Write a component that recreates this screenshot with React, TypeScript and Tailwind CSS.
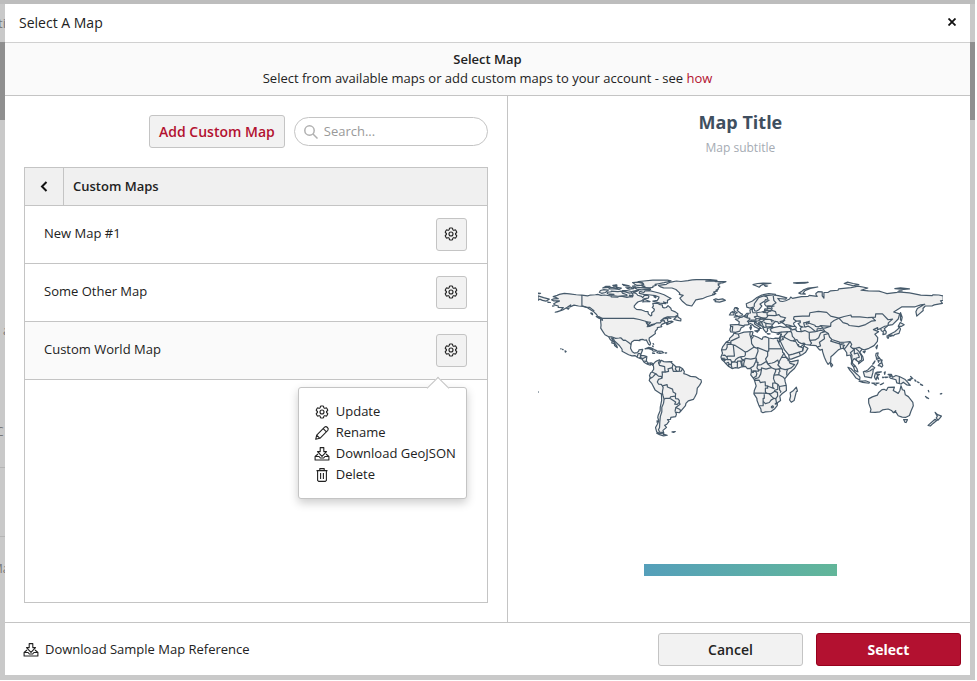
import { useState } from "react";
import { HiOutlineCog6Tooth } from "react-icons/hi2";

// Rings are plain lon/lat pairs, the map group flips the y axis
const LAND = [
  // North America
  "-168 65.6 -166 66.3 -162 66.5 -164 67.6 -166.5 68.4 -163 69.5 -161 70.3 -156.6 71.3 -152 70.8 -146 70 -141 69.7 -136 69 -134 69.6 -129 70 -127 70.3 -124 69.5 -121 69.8 -115 68.9 -115 68.2 -109 67.9 -108 68.6 -106 68.8 -101 67.7 -98 68.4 -96 68.2 -95.5 69.8 -96.5 71.2 -94.6 71.9 -92.5 70.9 -91.5 69.6 -88 68.6 -87 67.4 -85.5 69.5 -82.5 69.6 -81.5 68.5 -82 67 -86 66.3 -88 64.5 -91 63.8 -93 62 -94.5 60.2 -94.5 58.8 -92.5 57 -88 56.5 -85 55.3 -82.3 55.1 -82 53 -80 51.3 -79 51.6 -79 54 -77 55.5 -76.6 57.2 -78.5 58.8 -77.5 60 -78 62.4 -74 62.4 -71.5 61.2 -69.6 61 -69.3 59 -68 58.3 -66 58.7 -64.5 60.3 -62 58 -61.5 56.3 -58 54.8 -55.8 53.2 -56 51.7 -59 50.3 -65 50.3 -68.5 49 -71 47 -68 48.7 -64.5 49 -65 47.3 -64.5 46.2 -61 46.5 -60 46 -63 44.6 -65.5 43.5 -66 44.5 -64.5 45.4 -67 45 -70 43.7 -70.8 42.5 -70 41.7 -72 41.2 -74 40.8 -74 39.5 -75.5 38 -76 37 -75.7 35.5 -78 33.9 -81.2 31.5 -81.3 29.8 -80 27 -80.5 25.2 -81.8 26 -82.8 28 -83.8 29.9 -85.2 29.6 -87 30.4 -89.5 30.2 -89.5 29.2 -91.5 29.4 -94.5 29.5 -97 27.8 -97.4 25.5 -97.8 22.5 -96.2 19.3 -94.5 18.2 -92 18.6 -90.7 19.5 -90.3 21 -87 21.4 -87.6 19.5 -88.2 18.2 -88.9 15.9 -86 15.9 -83.3 15.1 -83.7 12 -83.5 10.8 -81.8 9 -79.6 9.6 -77.4 8.6 -77.9 7.3 -80 8.5 -80.3 7.4 -82.8 8.3 -84 9 -85.8 10 -87.5 12.8 -91 14 -94 16 -96.5 15.7 -99.5 16.7 -102 18 -105.3 19.8 -105.3 21.6 -108 25.2 -112 28.9 -113.1 31.2 -114.7 31.7 -113 28.5 -110 24.5 -109.5 23 -112 25 -112.2 26.5 -114.5 27.2 -114.1 28.6 -116 30.5 -117.2 32.7 -120.5 34.5 -122.5 37.5 -124.3 40.3 -124 43 -124.5 48 -122.7 47.3 -123 49 -127 50.8 -128 52.5 -130.4 54.8 -133 56.5 -136 58.5 -140 59.7 -144 60 -148 60.8 -151.5 59.2 -151 61 -154 59 -158 56.5 -163 54.8 -164.7 54.5 -160 56 -157.5 58.6 -162 58.7 -162 60 -165.5 61 -166 62 -164 63.2 -161 64.2 -161 64.7 -166 64.5",
  // Greenland
  "-46.8 82.6 -43 83.2 -39 83.5 -32 83.6 -27 83.4 -21 82.7 -31 82.2 -24 82.3 -22 81.7 -13 81.7 -16 80.6 -20 80.2 -18 80 -20 78.8 -18.5 77 -20 76 -19.6 75.2 -22 74 -20.5 73.5 -24 72.3 -22 71 -25 70.5 -23 70.2 -30 68.2 -34 66.5 -39.8 65.5 -42 62 -43.5 60 -48 61 -51.5 64 -54 67 -51 69.5 -54.5 70.3 -54 71.5 -57.5 74.7 -61 76 -68.5 76.1 -71 77 -73 78.3 -66 79.2 -65 80.1 -62 81.3 -57 82.2 -53 81.8",
  // Canadian archipelago
  "-61.8 82.4 -65 83 -70 83.1 -78 83 -86 82.2 -91 81.6 -87 80.5 -86 79.3 -88 78.3 -85 77.5 -88 76.5 -81 76.2 -78 76.5 -78 77.4 -75 78.5 -76 79.2 -73 79.8 -68 80.8 -65 81.5",
  "-87 80 -91 81.2 -96 80.8 -94 79.4 -92 78.3 -88 78.4",
  "-80 74.7 -80.5 75.6 -84 75.8 -89 76.4 -93 76.7 -96 76.9 -92 75 -88 74.4 -83 74.7",
  "-90 71.2 -86 70.3 -80 69.8 -76 69.3 -72.5 68 -73 66.5 -74 65 -78 64.4 -71.8 62.6 -66.5 62 -68.5 63.6 -65 62.7 -65 65 -61.8 66.6 -64 67.8 -68 70 -72.5 71.6 -77 72.7 -81 73.7 -85 73.5 -86 72 -89.5 73 -90 72",
  "-105 73.6 -101 73.8 -97 72.9 -97 71.7 -99 71.4 -102.5 72.5 -105 72.8",
  "-115 73.3 -109 72.8 -106 73.2 -105 71.5 -101 70 -101 69 -105 69.1 -109 68.7 -114 69.2 -117 70 -112.5 70.4 -118.5 70.9 -118 72.3 -115 72.7",
  "-121.5 74.5 -117.5 74.2 -120 72 -123.5 71.3 -125.5 72.2 -124.5 73.8",
  "-117 75.2 -112 75.1 -108 74.7 -106 75.9 -110 76.7 -109 75.9 -116 76.5",
  "-122.5 76 -120 77.4 -116 77.5 -117 76.6",
  "-98.5 76.6 -101 75.6 -99 75 -95 75.4 -97.5 76.7 -102 76.7",
  "-100 78.2 -105 79.3 -104 78.4 -99 77.9",
  "-110 78.7 -113.5 78.3 -110 78.1",
  "-111 78.4 -113 77.6 -110 77.5",
  "-94 77.9 -96 77.7 -93.5 77.6",
  "-85.5 65.9 -84 65.3 -80.5 63.9 -83 64 -87 63.6 -86 65.5",
  "-96 73 -92 74 -90.5 73.8 -94.5 72.1",
  "-96 69.3 -99 69.8 -98.5 69",
  "-77 68.3 -75 68.3 -75.5 67.3",
  "-59.3 48 -56 51.6 -55.5 50 -53 48.5 -53.2 46.7 -56 47.2",
  "-128.3 50.7 -125 50 -123.5 48.5 -126 49.2",
  "-133 54 -131.7 53.5 -131.5 52.3 -133 53.3",
  "-64.4 49.9 -61.9 49.1 -63.5 49.3",
  // Caribbean and Pacific specks
  "-84.9 22 -82 23.2 -79.5 22.8 -76 21 -74.2 20.2 -77.7 19.8 -78.5 21 -82 22.4",
  "-74.4 18.5 -73 20 -70 19.8 -68.4 18.6 -71.5 17.8",
  "-78.3 18.3 -76.4 18 -77.7 17.8",
  "-67.2 18.4 -65.7 18.3 -66.5 18",
  "-78 24.7 -77.6 23.8 -78.2 24.2",
  "-77.8 26.7 -77.2 26 -77.6 26.3",
  "-61.8 10.7 -61 10.7 -61.3 10.1",
  "-156 20.2 -155 19.6 -155.7 19",
  "-158.2 21.6 -157.7 21.3 -158.1 21.3",
  "-159.7 22.2 -159.4 21.9 -159.7 21.9",
  "-154.5 57.8 -152.3 58.3 -153 57.2",
  "-171.5 63.6 -169 63.1 -171 63.3",
  "-167 60.2 -165.7 60 -167 59.9",
  "-180 -16.2 -179.8 -16.2 -179.9 -16.6",
  "-180 69 -175 67.4 -170 66.1 -173 64.3 -176 65 -178.5 66.1 -180 65",
  "-180 71.5 -177.7 71.3 -178.5 70.9 -180 70.9",
  // South America
  "-77.4 8.6 -75.6 10.6 -74.8 11 -72 12.2 -71.4 11 -71.9 9.2 -70.5 11.8 -68.2 10.6 -66 10.4 -62.5 10.6 -61 9.2 -60 8.4 -57.5 6 -54 5.9 -51.5 4.3 -50 1.8 -50.5 0 -48 -.8 -44.5 -2.5 -40 -2.9 -37.2 -4.8 -35.2 -5.5 -34.8 -7.5 -36.5 -10.5 -38.5 -13 -39 -17.5 -40.8 -21 -42 -23 -46.5 -24.2 -48.6 -26.5 -49 -28.5 -52 -32 -54.5 -34.8 -58 -34.2 -57 -36 -57.7 -38.2 -62 -39 -62.3 -40.8 -65 -41 -63.6 -42.5 -65.5 -45 -67.5 -46 -65.8 -47.8 -69 -50.5 -68.3 -52.5 -71 -53.8 -74.5 -52 -75.6 -48 -74 -45 -72.7 -42 -73.6 -39 -73.2 -37 -71.5 -33 -71.4 -30 -70.2 -24 -70.3 -18.3 -76 -14.5 -78.8 -9 -81.2 -6.2 -80.3 -3.4 -81 -2 -80 .5 -78.8 1.5 -77.2 3.8 -77.4 6.5 -77.9 7.3",
  "-68.6 -52.7 -68 -54 -65.2 -54.8 -68.5 -55.4 -72 -54.3 -74.5 -53 -71 -53.2",
  "-61 -51.8 -58 -51.5 -59.5 -52.3",
  "-74.2 -41.9 -73.5 -42.5 -74.2 -43.3",
  // Africa
  "-6 35.8 -2 35.1 3 36.8 10 37.3 11 36.8 10.3 34.3 15.3 32.3 19 30.3 20 32.5 22 32.8 25 31.6 29 30.9 31 31.5 34.2 31.3 34.9 29.5 34.2 27.9 32.6 29.9 33.7 27.5 35.5 24 37.2 21 37.3 19 38.5 18 39.8 15.5 43 12 42.8 11.5 44.5 10.4 51.2 12 50.7 9.3 47.8 4.5 44 1.2 41.5 -1.8 39.2 -4.7 39.5 -7 40.5 -10.5 40.7 -15 37 -17.7 34.8 -20 35.5 -24 32.7 -26 32.5 -28.5 30 -31.5 27 -33.7 22 -34 19.8 -34.8 18.3 -34 18 -31.5 16.3 -28.5 14.6 -24 14.4 -22 11.8 -18 12.2 -15 13.8 -11 12.3 -6 11.9 -5 9 -1.2 9.5 1 9.5 3.8 8.5 4.6 6 4.3 4.3 6.3 1 6 -2 4.8 -4.6 5.2 -7.5 4.4 -11 6.6 -13.2 8.9 -15 11 -16.7 12.4 -17.5 14.7 -16.1 18 -17 21 -16 23.7 -13 27.7 -10 29.5 -9.8 31.3 -6.8 34",
  "49.5 -12.1 50.5 -15.6 49.5 -16 47.5 -24 45 -25.5 43.5 -23.5 44.4 -20 44 -17 47 -15",
  // Eurasia
  "34.2 31.3 35.5 33.9 36 36.8 32.5 36.1 30.5 36.5 27.5 37 26.3 39.3 29 40.7 31.3 41.2 35 42 38.5 41 41.5 41.5 39 43.8 37 45.2 39.2 47.2 35 46.2 36.5 45.4 33.7 44.4 33 46 30.7 46.4 28.6 43.8 27.7 42.6 29 41.1 26.2 40.8 23.7 40.2 24 38 22.5 36.5 20.2 39.5 19.4 41.8 15.5 43.7 13.7 45.2 12.3 45.3 12.5 44.1 16 41.9 18.4 40.1 16.8 40.4 16.5 38.5 15.8 38 15.7 40 12.2 41.7 10.4 43.6 8.7 44.4 6.3 43.2 3.2 43 3 41.8 .5 40.7 -.3 39 -.7 37.7 -4.6 36.6 -6.3 36.8 -8.9 37 -9.4 38.8 -8.8 41.5 -9.2 43.2 -4 43.5 -1.6 43.4 -1.2 46 -4.6 48.3 -1.6 48.7 -1.5 49.7 1.5 50.2 4 51.8 5.5 53.4 8.7 53.8 8.2 56.5 10.6 57.7 10.3 56 11 54 14 54 18.5 54.7 21 55.3 21.5 57.4 24.2 57.3 23.5 59.2 28 59.6 29.8 60 25 60.1 22.5 60 21.4 61.5 21.5 63 25.3 65.1 22 65.6 21.5 64.5 17.2 61.8 18.8 60 16.5 57 14.4 55.5 12.7 55.6 11.2 59 8.3 58.1 5.5 59 5 62 10.5 64.5 14.5 67.5 18.8 69.8 25 71 31 70.3 30 69.6 33.5 69.3 41 67.3 40 66.2 33 66.7 35 64.3 37.3 64 40 64.7 43.5 66.2 44.5 68 46 66.8 54 68.4 60 68.6 61 69.5 68 68.5 67 70 66.8 71.2 69 72.8 72.5 72.6 72.5 69 74 67 74 72 77.5 72 80 73.5 86.5 74 87 75.2 98 76.3 104.3 77.6 113 76 107 74 113.5 73.5 123 73.2 127 72 130 71 139 72.2 140 72.6 150 71.6 160 69.7 170 69.2 171 70 176 69.8 180 69 180 65 177.5 64.7 179.3 62.4 172 61 170 60 164 60 162 57.8 162.2 56 158.5 52.8 156.5 51.1 155.7 55 157 57.8 163.5 61.5 160 61 155 59.3 143 59.2 136 54.7 141.3 53 140 48.5 135 43.4 131 42.8 127.6 39.8 129.4 37 129 35.2 126.4 34.6 126.8 37.2 125 38 124.5 39.9 121.5 39 121.7 40.8 118 39 122.5 37.2 119.2 35 121.8 32 121.5 28.5 118.5 24.8 114 22.4 110 21 108 21.6 105.8 19 108.5 15 109.2 12 107 10.5 104.8 8.7 105 10 102.5 12 100.8 13.3 99.5 11.5 99.3 9.3 102 6.5 103.5 4 104.2 1.4 101.3 2.8 100.3 6 98.3 8.5 98.7 11.5 97.5 16.5 94.3 16 94.3 18.5 91.5 22.6 88.5 21.8 86.8 21 82.3 16.7 80.2 15 80 10.5 77.7 8.1 76.2 10.5 74.4 14.5 72.8 19.5 72.6 21.5 70.5 20.8 69 22.3 67 24.8 61.6 25.2 57.5 25.8 56.4 27 54 26.6 51.5 27.9 50 30.2 48 29.8 50 26.7 51 24.6 51.5 25.8 51.7 24 54 24.2 56.3 26.2 56.6 24.3 59.8 22.4 57.8 19 55 17 52 15.5 45 12.8 43.3 12.8 42.7 16.5 39 21 37.2 24.8 34.9 29.5",
  // British Isles, Iceland, Arctic
  "-5.7 50.1 -3 51.4 -5 51.7 -4.5 53.3 -3 54 -5 55 -6 56.7 -5 58.6 -3 58.6 -4 57.6 -2 57.6 -3 56 0 53.5 1.7 52.7 1 51.2",
  "-10 52 -8.5 54.3 -7 55.2 -5.5 54.5 -6.2 52.2",
  "-24 65.6 -22 66.4 -20 65.7 -16 66.4 -13.6 65 -18.7 63.4 -22.7 63.9 -22 64.8",
  "11 79 15 80 20 80.4 27 80.2 20 79.2 18 78.2 16.5 76.7 13.5 78",
  "21 78.2 24 77.8 22.5 77.4",
  "47 80.6 51 80.8 60 81 57 80.3 50 80.1",
  "51.7 71.5 54 72.8 56 74.5 60 76 68.5 76.9 62 75.7 57 73.5 55.5 71.5 57.5 70.6 53.5 70.8",
  "92 80 95 81.2 100 80 105 79 100 78 96 79",
  "137 75.5 142 76.1 150 75.2 145 74.8",
  "141 73.5 143.5 73.4 140.5 73.3",
  // Mediterranean islands
  "8.2 41 9.7 41 9 39",
  "8.7 42.6 9.4 42.8 9.2 41.4",
  "12.5 38 15.5 38.2 15 36.8",
  "23.6 35.5 26.2 35.2 24.7 35",
  "32.4 35 34.5 35.6 33.6 34.7",
  // South and east Asia
  "79.8 8 80 9.8 81.8 7.5 80.6 6",
  "142 54.2 143.5 50 142.8 46.6 142 48",
  "140 42 141.8 45.4 145.3 43.3 143 42",
  "141 41.4 142 39.5 140.7 35.7 137 34.7 135.6 33.5 133 34.2 131 34 134 35.6 137 37.2 139.7 39.5",
  "130 33.6 132 33.3 131 31.2 130.2 32",
  "132.5 33.4 134.5 34.2 133.5 33",
  "121.6 25.2 120.8 22 120.2 23.4",
  "108.7 19.3 110.8 20 110 18.4",
  "120.4 18 122.2 18.4 121.6 16 124 13 120.7 13.9 120 16.2",
  "122 11.8 123.2 11.5 122.5 10",
  "124.3 12.5 125.7 12 125.2 10.2",
  "123.4 8.6 125.5 9.7 126.3 7 125.3 5.8 124 6.8 122.2 7",
  "117.3 8.3 119.4 11.2 118.5 9.3",
  "121 13.4 121.3 12.3 120.5 13",
  "95.3 5.6 98 4.5 100.5 2 103.8 -1 106 -3.2 105.8 -5.8 102.5 -4 100 -.5 97 3",
  "105.2 -6.7 108.5 -6.7 111 -6.4 114.5 -7.7 114 -8.6 108.5 -7.8",
  "109 1.6 111.5 2.5 113 3.2 116.7 7 119.2 5.2 117.8 3.5 117.5 .8 116.2 -3.8 114 -3.4 110.2 -2.8",
  "119.8 .5 121 1.2 125 1.5 120.5 .3 121.3 -.9 123.3 -.8 121.5 -2 122.5 -5 121 -3 120.4 -5.6 119.5 -4.5 118.9 -2.8",
  "127.6 1 128.5 1.5 128 -.8",
  "128 -3.2 130.7 -3.2 129 -3.6",
  "126 -3.2 127.2 -3.3 126.5 -3.8",
  "116.5 -8.4 119 -8.5 118 -9",
  "120 -8.4 123 -8.4 121 -9",
  "124 -9.9 127 -8.4 125 -9.6",
  "119 -9.5 120.6 -10.2 119.5 -10",
  "131 -.8 134 -.8 135 -3.3 138 -1.7 141 -2.6 145.8 -5 147.7 -7 150.7 -10.5 147.5 -10 144.5 -7.7 142.5 -9.3 138.7 -8.3 138 -5.5 133 -4 132 -2.8 133.8 -2.3",
  "148.5 -5.8 152 -4.2 150.5 -6.2",
  "151 -2.6 153 -4.5 152 -3.6",
  "154.7 -5.5 155.8 -6.8 155 -6.5",
  "157 -7.4 158.5 -8 157.5 -7.8",
  "159.7 -9.3 161.7 -10.5 160 -9.9",
  "166.7 -15 167.2 -16.3 167 -15.6",
  "164.2 -20.3 167 -22.2 165.5 -21.7",
  "177.4 -18 178.7 -17.7 178 -18.2",
  // Australia and New Zealand
  "142.5 -10.8 143.7 -14.4 145.5 -15 146.3 -18.9 149 -20.5 153 -25.5 153.4 -28.7 151.3 -33.5 150 -37.3 146.5 -39 143.5 -38.7 140 -37.5 138 -34.3 136 -34.8 137.8 -33 135.6 -34.8 134 -32.8 131 -31.5 126 -32.3 123.7 -34 119.5 -34.5 115.2 -34.3 115.8 -31.8 113.8 -26.3 113.7 -22.5 117 -20.7 121.5 -19.2 122.5 -17 125.5 -14.3 127.5 -14 129.5 -15 131 -12.2 136.7 -12 135.6 -15 140 -17.6 141.5 -15",
  "144.8 -40.8 148.2 -41 147 -43.5 146 -43.3",
  "172.8 -34.5 175 -36.5 178.4 -37.8 177 -39.5 175.2 -41.6 173.8 -39.3 174.7 -38",
  "172.7 -40.6 174.2 -41.7 171 -44.3 168.5 -46.6 166.5 -46",
];

const WATER = [
  "49.5 46.5 53 46.8 53 45.2 51 44.5 52.5 42.5 54.5 41.5 53 40 54 37.2 50 37.5 48.9 39.5 49.5 41 47.5 43 47 44.8",
  "58.5 45.5 61 46.5 60.5 44.5 58.3 43.8",
  "-84 46 -80 45.5 -82.3 43.1 -83.5 44.5",
  "-83 41.7 -79 42.8 -81 41.8",
  "-79.5 43.4 -76.5 44 -77 43.4",
];

const BORDERS = [
  // Americas
  "-141 69.7 -141 60.2 -137 59 -134 58.8 -130 55.5",
  "-123 49 -95 49 -90 48 -84.5 46.5 -82.5 45.3 -82.5 42.8 -79 42.8 -76 44.2 -74.8 45 -71.5 45 -70 46.8 -67.8 47 -67.2 45",
  "-117.2 32.6 -114.7 32.7 -111 31.3 -108 31.6 -106.5 31.8 -104 29.4 -102.5 29.7 -99.5 27.5 -97.3 25.9",
  "-92.2 14.5 -91.5 16 -91 17.8 -89.2 17.8 -89 15.9",
  "-89.3 14.4 -87 13.3 -85.5 14 -83.3 15",
  "-90 13.8 -89.3 14.4 -88.5 15.8",
  "-85.7 11.1 -83.7 10.9",
  "-82.8 8.4 -82.6 9.6",
  "-77.4 8.6 -77.8 7.4",
  "-71.9 11.8 -73 9.5 -72 7.2 -67.5 6.2 -67.3 3 -67 1.2 -69.8 1.5 -69.5 -1 -70 -4.2",
  "-67 1.2 -64 2 -64.5 4.2 -60.8 5.2 -60 8.3",
  "-60.8 5.2 -59.8 2 -56.5 1.9 -52.8 2.2 -51.6 4.2",
  "-57.3 6 -58 4 -56.5 1.9",
  "-54 5.8 -54.5 2.3",
  "-78.8 1.4 -75.4 -.2 -78 -3 -80.3 -4.3 -80.3 -3.5",
  "-75.4 -.2 -73 -2.3 -70 -2.8 -70 -4.2 -73 -5.2 -74 -7.5 -72.8 -9.5 -70.5 -9.6 -69.5 -11 -68.8 -12.5 -69.4 -15.5 -69.5 -17.5 -70.3 -18.3",
  "-69.5 -11 -65.3 -9.8 -65 -12 -60.5 -13.8 -60 -16.3 -57.7 -17.8 -58 -20 -62.2 -20.6 -62.8 -22 -66.5 -22 -68 -22.8 -69 -19.5 -69.5 -17.5",
  "-58 -20 -57.8 -22.2 -55.6 -22.5 -54.4 -24 -54.6 -25.6 -56.3 -27.4 -58.6 -27.2 -57.7 -25.3 -62.5 -22.2",
  "-54.6 -25.6 -53.8 -27.2 -57.6 -30.2 -53.8 -32 -53.3 -33.7",
  "-57.6 -30.2 -58.3 -33.8",
  "-68 -22.8 -68.5 -26.5 -70 -30 -70 -34 -71.3 -38 -71.8 -43 -72 -48 -73 -50 -72 -52 -68.5 -52.3",
  "-71.7 19.6 -71.8 18",
  "-68.6 -52.7 -68.6 -54.8",
  // Africa
  "-2 35.1 -1.3 32.3 -4 31 -8.7 28.8 -8.7 27.3 -13 27.7",
  "-8.7 27.3 -8.7 26 -12 26 -12 23.4 -13 21.3 -17 21",
  "-8.7 26 -4.8 25 -6.5 25 -5.5 15.5 -11.5 15.4 -12.2 14.8 -14 16.3 -16.2 16.2",
  "-4.8 25 1.2 21.1 3.2 19.7 4.2 19.2 4.2 16.5 3.5 15.4 0 14.9 -2 14.2 -4.4 12.5 -5.5 10.5 -8 10.2 -9 12.4 -11.4 12.4 -12.2 14.8",
  "4.2 19.2 5.6 19.4 12 23.5 14.2 22.6 15 23 24 19.5 24 20 25 20 25 31.6",
  "8.5 37 8.2 34.6 9 32.1 10.3 34",
  "9 32.1 9.5 30.3 9.8 26.5 12 23.5",
  "11.5 33.1 10.2 31.5 9.5 30.3",
  "25 22 37 22",
  "15 23 15.5 20 13.5 14.5 14 13 14.5 10 15.5 10 15 7.5 18.5 8 23 11 22.2 13 24 15.7 24 19.5",
  "3.5 11.7 4 13.5 9 12.8 13.5 13.7",
  "3.5 11.7 1 12.8 0 14.9",
  "2.7 6.3 2.8 9 3.6 11.7",
  "1.6 6.2 1.2 9 .8 11 3.4 11.9",
  "1.2 6.1 0 11.1 .8 11",
  "-3 5 -2.8 9.7 -2.8 11 0 11.1",
  "-2.8 9.7 -5.5 10.5 -8 10.2 -8.3 7.5 -7.5 4.4",
  "-11.4 6.9 -9.3 8.4 -8.3 7.5",
  "-13.2 9 -11 10 -10.3 8.4 -11.4 6.9",
  "-16.7 12.4 -13.7 12.6 -13.7 11.8 -15 11",
  "-13.7 12.6 -11.4 12.4",
  "-16.6 13.5 -14 13.6",
  "8.5 4.8 11.5 6.8 13.5 11 14 13",
  "15 7.5 14.5 5 16 3 16 2.2 9.8 2.2",
  "9.8 1 11.3 1 11.3 2.2 13.2 2.2 14.4 0 13.8 -2.4 11.2 -4",
  "12.2 -5.8 13 -4.5 16 -3.7 17.8 -.5 18.5 3.5 18.5 5 22.5 4 27.4 5.2 24 8.7 23 11",
  "16 3 18.5 3.5",
  "27.4 5.2 31 3.7 31.2 2.2 29.6 -1.4 29.2 -4.5 30.7 -8.3 28.5 -8.5 28.5 -12 29.8 -13.4 25.5 -11.7 24 -11 22 -11 21.8 -7.3 17.5 -8 16.5 -5.9 12.3 -6",
  "24 -11 24 -13 22 -13 22 -16.3 23.2 -17.6 18.5 -17.4 14 -17.3 11.8 -17.3",
  "23.2 -17.6 25.2 -17.8 27 -18 30.4 -15.8 30.2 -14.8 33 -14 33 -9.5 30.7 -8.3",
  "21 -18.3 21 -22 20 -22 20 -28.5 16.5 -28.6",
  "20 -24.8 22 -26.7 25.5 -25.7 27 -23.6 29.4 -22.1 27.7 -20.5 25.2 -17.8",
  "29.4 -22.1 31.2 -22.3 32.9 -20 32.7 -16.7 30.4 -15.8",
  "31.2 -22.3 32 -26.8 32.9 -26.9",
  "31 -26 30.8 -27.2 32 -26.8",
  "27 -29.6 28.6 -28.7 29.3 -29.7 28 -30.6 27 -29.6",
  "33 -9.5 34.5 -11.5 40.4 -10.5",
  "34.5 -11.5 34.6 -14.5 35.8 -16 35.2 -17",
  "39.2 -4.6 37.6 -3 34 -1 29.6 -1.4",
  "34 -1 34 1 35 2 34 4.2 31 3.7",
  "34 4.2 36 4.5 39.5 3.5 42 4 41 2 41 -1.7",
  "42 4 45 5 48 8 44 9 43 11",
  "36 4.5 33 7.8 34 9 34.3 10.7 36.3 14.3 38.5 18",
  "36.3 14.3 40 14.5 42.5 12.5 42 11",
  "23 11 24 8.7 28 9.4 30 10 33 12 34 9",
  // Middle East
  "34.9 29.5 35.5 32.5 38.8 33.4 42.3 37.2 36 36.8",
  "35.5 32.5 36 34.5 36.8 34.6",
  "38.8 33.4 39.2 32 37 31.5 38 30.4 34.9 29.4",
  "39.2 32 44.7 29.2 46.5 29 48.4 28.5",
  "46.5 29 48 30",
  "42.3 37.2 44.8 37.2 45.5 35.8 46 33 48 31 48.5 30",
  "44.8 37.2 44.5 39.7 41.5 41.5 46.5 41.8 48.5 41.8",
  "43.5 41 46 38.8 48 39.5 48.8 38.4",
  "42.8 16.4 46.5 17.2 52 19 55 20 55.5 22.7 52 24",
  "52 19 53 16.6",
  "55 20 56 24.7",
  "40 43.5 43.5 42.8 46.5 41.8",
  // Central and south Asia
  "54 37.3 57 38.2 61 36.5 61 31.5 61.5 29.4 63 27 61.6 25.2",
  "61 36.5 64.5 37 66.5 37.3 71 38.5 75 37.3 71 36 69.3 31.9 66.3 29.9 61.5 29.4",
  "66.5 37.3 62 41 60 42.2 57 41.3 56 45 58.5 45.6 66 42.9 66.5 41.9 69 41.5 71 42.5 80 42 80.2 45 83 47.2 87.3 49.2",
  "52.5 41.8 56 41.3",
  "67.8 37.2 68 39.8 71 40 73.5 39.5 75 37.3",
  "71 42.5 73 40.5 74.9 40.3 80 42",
  "49.5 46.5 47 48.5 47.5 50.5 55 51 61 51 61.5 54 69 55.3 76.5 54.3 80 51 87.3 49.2 92 50.7 98 52 98.5 50.3 106 50.3 113 49.6 116.7 49.9 119.7 50 120 53 126 53 131 47.8 135 48.4 131.2 45 131 42.8",
  "87.3 49.2 91 45.2 95 44.2 96.5 42.7 105 41.7 111 43.5 116 46.5 119.8 47 116.7 49.9",
  "75 37.3 78 35.5 79 32.5 81 30.3 88 27.9 92 27.8 97.3 28.3 98.7 25.8 97.6 24 99.5 22.3 102 22.4 105.3 23.3 108 21.6",
  "78 35.5 74 34.5 74.5 31 70 27.8 71 24.5 68.2 23.7",
  "81 30.3 80 28.8 88 26.4 88 27.9",
  "88.8 27 92 26.9",
  "89 22 88.3 26 92.3 25 91 23.8 92.3 21.2",
  "92.3 22 94 24 97.3 28.3",
  "99.5 22.3 101 21.5 97.5 18.5 98.9 16.2 98.7 11.5",
  "101 21.5 101 17.5 104 18.3 105.5 14.5 102.5 13.6 102.8 12",
  "102 22.4 104.8 20 107.5 15.5 107.5 12 104.5 10.4",
  "100.2 6.6 102 6.2",
  "124.3 40 128 42 130.6 42.4",
  "126.7 37.8 128.4 38.6",
  "109.6 1.9 112 1.4 114.8 2.3 117.6 4.2",
  "141 -2.6 141 -9.1",
  // Europe
  "-7.5 37.2 -7 41.8 -8.8 41.9",
  "-1.7 43.3 3 42.4",
  "7.5 43.8 6.8 46 9.5 46.4 13.7 46.5 13.7 45.6",
  "6.8 46 6 46.3 7.6 47.6 8.2 49 6 49.5 2.5 51",
  "6 49.5 6 51.8 7 53.3",
  "4 51.3 6 51",
  "7.6 47.6 10.5 47.4 13 47.5 14 48.8 12.2 50.3 14.8 51 14.3 53.8",
  "14 48.8 17 48.7 18.8 49.5 14.8 51",
  "9.5 46.4 9.6 47.5",
  "17 48.7 16.2 46.9 13.7 46.5",
  "17 48 22.2 48.4 18.8 49.5 22.6 49.2",
  "16.2 46.9 18.8 45.9 22.2 48.4 26.7 48 28.2 45.5",
  "26.7 48 30 46.5",
  "18.8 45.9 19 44.9 16 45.2 15.7 44.8 18.5 42.5",
  "20.3 46.1 22.5 44.5 28.5 43.8",
  "22.5 44.5 22.4 42.3 23 41.3 26.4 41.7 28 42",
  "20 42.5 20.6 41 23 41.3",
  "20.6 41 20 39.7",
  "19 44.9 19.3 43.4 20 42.5",
  "22.6 49.2 24 50.8 23.5 52.5 23.5 54 19.5 54.4",
  "23.5 51.6 30.6 51.4 34 52.3 35.5 50.5 40 49.6 38.3 47.5",
  "31.8 52.1 31 55 28.2 56 26 55.5 23.5 54",
  "21 56.2 26.5 55.7 28 57.5 27.5 59.3",
  "24.3 57.9 27.5 57.6",
  "21 55.3 22.8 54.4",
  "28 60.5 31.5 62.8 29.5 65 29 69",
  "24.2 65.8 23.5 68 20.5 69 29 69.8 28 70",
  "20.5 69 16 67.5 14 64.5 12.2 62 12 59.2",
  "26 41.7 26.3 40.9",
  "-7.5 54.2 -6 54.1",
];

const MAPS = ["New Map #1", "Some Other Map", "Custom World Map"];

const GearIcon = () => (
  <HiOutlineCog6Tooth className="h-4 w-4 shrink-0" strokeWidth={1.7} />
);

const PencilIcon = () => (
  <svg
    className="h-4 w-4 shrink-0"
    viewBox="0 0 16 16"
    fill="none"
    stroke="currentColor"
    strokeWidth="1.1"
    strokeLinejoin="round"
    aria-hidden="true"
  >
    <path d="M1.700 14.300l1-4.200 7.900-7.900c1.800-1.600 4.700 1.300 3.200 3.200l-7.900 7.900zM9.200 3.600l3.200 3.200M2.700 10.100l3.200 3.200" />
  </svg>
);

const DownloadIcon = () => (
  <svg
    className="h-4 w-4 shrink-0"
    viewBox="0 0 16 16"
    fill="none"
    stroke="currentColor"
    strokeWidth="1.1"
    strokeLinejoin="round"
    aria-hidden="true"
  >
    <path d="M6.200 1.600h3.600v4h2.700L8 10.400 3.500 5.600h2.700z" />
    <path d="M4 8L1.100 10.500v3.500h13.800v-3.500L12 8M1.100 10.500h4l1.200 1.500h3.400l1.200-1.500h4" />
  </svg>
);

const TrashIcon = () => (
  <svg
    className="h-4 w-4 shrink-0"
    viewBox="0 0 16 16"
    fill="none"
    stroke="currentColor"
    strokeWidth="1.1"
    strokeLinejoin="round"
    aria-hidden="true"
  >
    <path d="M2.500 3.600h11M5.800 3.600v-2h4.400v2M3.600 3.600v9.800l1 1h6.800l1-1V3.600M6.600 6v6M9.400 6v6" />
  </svg>
);

const ACTIONS = [
  { label: "Update", icon: <GearIcon /> },
  { label: "Rename", icon: <PencilIcon /> },
  { label: "Download GeoJSON", icon: <DownloadIcon /> },
  { label: "Delete", icon: <TrashIcon /> },
];

function WorldMap() {
  return (
    <svg
      className="block w-full"
      viewBox="-180 -84 360 142"
      fill="none"
      stroke="#465a6b"
      strokeWidth="1.2"
      strokeLinejoin="round"
      role="img"
      aria-label="World map"
    >
      <g transform="scale(1 -1)">
        {LAND.map((ring) => (
          <path
            key={ring}
            d={`M${ring}Z`}
            fill="#f0f0f0"
            vectorEffect="non-scaling-stroke"
          />
        ))}
        {WATER.map((ring) => (
          <path
            key={ring}
            d={`M${ring}Z`}
            fill="#fff"
            vectorEffect="non-scaling-stroke"
          />
        ))}
        {BORDERS.map((line) => (
          <path
            key={line}
            d={`M${line}`}
            vectorEffect="non-scaling-stroke"
          />
        ))}
      </g>
    </svg>
  );
}

function ActionMenu() {
  return (
    <div className="absolute top-full right-0 z-10 mt-5 w-[169px] rounded-[3px] border border-[#c4c4c4] bg-white pt-3.5 pb-3 pl-[15px] shadow-[0_4px_10px_rgba(0,0,0,0.2)]">
      <span className="absolute -top-2 right-5 h-4 w-4 rotate-45 border-t border-l border-[#c4c4c4] bg-white" />
      <ul className="relative">
        {ACTIONS.map((action) => (
          <li key={action.label}>
            <button
              type="button"
              className="flex h-[21px] cursor-pointer items-center gap-1.5 whitespace-nowrap"
            >
              {action.icon}
              {action.label}
            </button>
          </li>
        ))}
      </ul>
    </div>
  );
}

// Dimmed page behind the dialog, only its edges stay visible
function Backdrop() {
  return (
    <div
      aria-hidden="true"
      className="absolute inset-0 overflow-hidden text-[12px] leading-4 text-[#777]"
    >
      <div className="absolute inset-x-0 top-0 h-1 bg-[#bdbdbd]" />
      <div className="absolute inset-x-0 top-[42px] h-[78px] bg-[#8f8f8f]" />
      <div className="absolute left-0 top-[467px] h-[70px] w-2 border-y border-[#b5b5b5]" />
      <span className="absolute top-[15px] -left-0.5 text-[13px]">ti</span>
      <span className="absolute top-[323px] left-[3px]">a</span>
      <span className="absolute top-[424px] -left-1">C</span>
      <span className="absolute top-[561px] -left-2">Ma</span>
    </div>
  );
}

export default function App() {
  const [openMap, setOpenMap] = useState<string | null>("Custom World Map");
  const [search, setSearch] = useState("");

  const visibleMaps = MAPS.filter((name) =>
    name.toLowerCase().includes(search.toLowerCase()),
  );

  return (
    <div className="h-screen bg-white pr-0.5 pb-px font-['Open_Sans',sans-serif] text-[13px] text-[#222]">
      <div className="relative flex h-full bg-[#c9c9c9] px-[5px] pt-1 pb-[5px]">
        <Backdrop />

        <div
          role="dialog"
          aria-label="Select A Map"
          className="relative flex min-w-0 flex-1 flex-col bg-white"
        >
          {/* Header */}
          <header className="flex h-[39px] shrink-0 items-center justify-between border-b border-[#d0d0d0] pr-2.5 pb-0.5 pl-3.5">
            <h1 className="text-[14px] font-medium">Select A Map</h1>
            <button
              type="button"
              aria-label="Close"
              className="flex h-4 w-4 cursor-pointer items-center justify-center"
            >
              <svg
                className="h-2 w-2"
                viewBox="0 0 8 8"
                stroke="#111"
                strokeWidth="1.800"
              >
                <path d="M.5.5l7 7M7.500.5l-7 7" />
              </svg>
            </button>
          </header>

          {/* Intro */}
          <div className="shrink-0 border-b border-[#c4c4c4] bg-[#fafafa] py-[7px] text-center leading-[19px]">
            <h2 className="font-semibold">Select Map</h2>
            <p>
              Select from available maps or add custom maps to your account -
              see{" "}
              <a href="#how" className="text-[#b31130]">
                how
              </a>
            </p>
          </div>

          <div className="flex min-h-0 flex-1">
            {/* Map list */}
            <section className="flex w-[52.1%] flex-col border-r border-[#c4c4c4] p-[19px]">
              <div className="mb-[19px] flex items-center justify-end gap-[9px]">
                <button
                  type="button"
                  className="h-[33px] cursor-pointer rounded-[3px] border border-[#c4c4c4] bg-[#f2f2f2] px-[9px] text-[14px] font-semibold text-[#b31130]"
                >
                  Add Custom Map
                </button>
                <div className="flex h-[29px] w-[194px] items-center gap-1.5 rounded-full border border-[#c4c4c4] px-[9px]">
                  <svg
                    className="h-3.5 w-3.5 shrink-0"
                    viewBox="0 0 14 14"
                    fill="none"
                    stroke="#b0b0b0"
                    strokeWidth="1.500"
                    aria-hidden="true"
                  >
                    <circle cx="5.500" cy="5.500" r="4.700" />
                    <path d="M9 9l4.500 4.500" />
                  </svg>
                  <input
                    type="text"
                    aria-label="Search maps"
                    value={search}
                    onChange={(e) => setSearch(e.target.value)}
                    placeholder="Search..."
                    className="w-full min-w-0 outline-none placeholder:text-[#999]"
                  />
                </div>
              </div>

              <div className="flex-1 border border-[#c4c4c4]">
                <div className="flex h-[38px] border-b border-[#c4c4c4] bg-[#f0f0f0]">
                  <button
                    type="button"
                    aria-label="Back"
                    className="flex w-[39px] cursor-pointer items-center justify-center border-r border-[#c4c4c4]"
                  >
                    <svg
                      className="h-3 w-3"
                      viewBox="0 0 12 12"
                      fill="none"
                      stroke="#111"
                      strokeWidth="2"
                    >
                      <path d="M8.500 1L4 5.500 8.500 10" />
                    </svg>
                  </button>
                  <h3 className="self-center pl-[9px] font-semibold">
                    Custom Maps
                  </h3>
                </div>
                <ul>
                  {visibleMaps.map((name) => (
                    <li
                      key={name}
                      className={`flex h-[58px] items-center justify-between border-b border-[#c4c4c4] pr-5 pb-px pl-[19px] ${
                        openMap === name ? "bg-[#fafafa]" : "bg-white"
                      }`}
                    >
                      {name}
                      <div className="relative">
                        <button
                          type="button"
                          aria-label={`Settings for ${name}`}
                          onClick={() =>
                            setOpenMap(openMap === name ? null : name)
                          }
                          className="flex h-[33px] w-[31px] cursor-pointer items-center justify-center rounded-[3px] border border-[#c4c4c4] bg-[#f2f2f2]"
                        >
                          <GearIcon />
                        </button>
                        {openMap === name && <ActionMenu />}
                      </div>
                    </li>
                  ))}
                </ul>
              </div>
            </section>

            {/* Preview */}
            <section className="flex flex-1 flex-col items-center pt-3 pr-[27px] pl-[30px]">
              <h2 className="text-[18px] leading-7 font-bold text-[#3f4f5f]">
                Map Title
              </h2>
              <p className="mt-0.5 text-[12px] leading-5 text-[#a5abb3]">
                Map subtitle
              </p>
              <div className="flex w-full flex-1 items-center pb-1">
                <WorldMap />
              </div>
              <div className="mb-[46px] h-3 w-[193px] bg-linear-to-r from-[#559fba] to-[#62b699]" />
            </section>
          </div>

          {/* Footer */}
          <footer className="flex h-[53px] shrink-0 items-center justify-between border-t border-[#c4c4c4] pr-[9px] pl-[18px]">
            <a href="#sample" className="flex items-center gap-1.5 pt-0.5">
              <DownloadIcon />
              Download Sample Map Reference
            </a>
            <div className="flex gap-[13px]">
              <button
                type="button"
                className="h-[33px] w-[145px] cursor-pointer rounded-[3px] border border-[#c4c4c4] bg-[#f2f2f2] text-[14px] font-semibold"
              >
                Cancel
              </button>
              <button
                type="button"
                className="h-[33px] w-[145px] cursor-pointer rounded-[3px] border border-[#98001c] bg-[#b31130] text-[14px] font-bold text-white"
              >
                Select
              </button>
            </div>
          </footer>
        </div>
      </div>
    </div>
  );
}
